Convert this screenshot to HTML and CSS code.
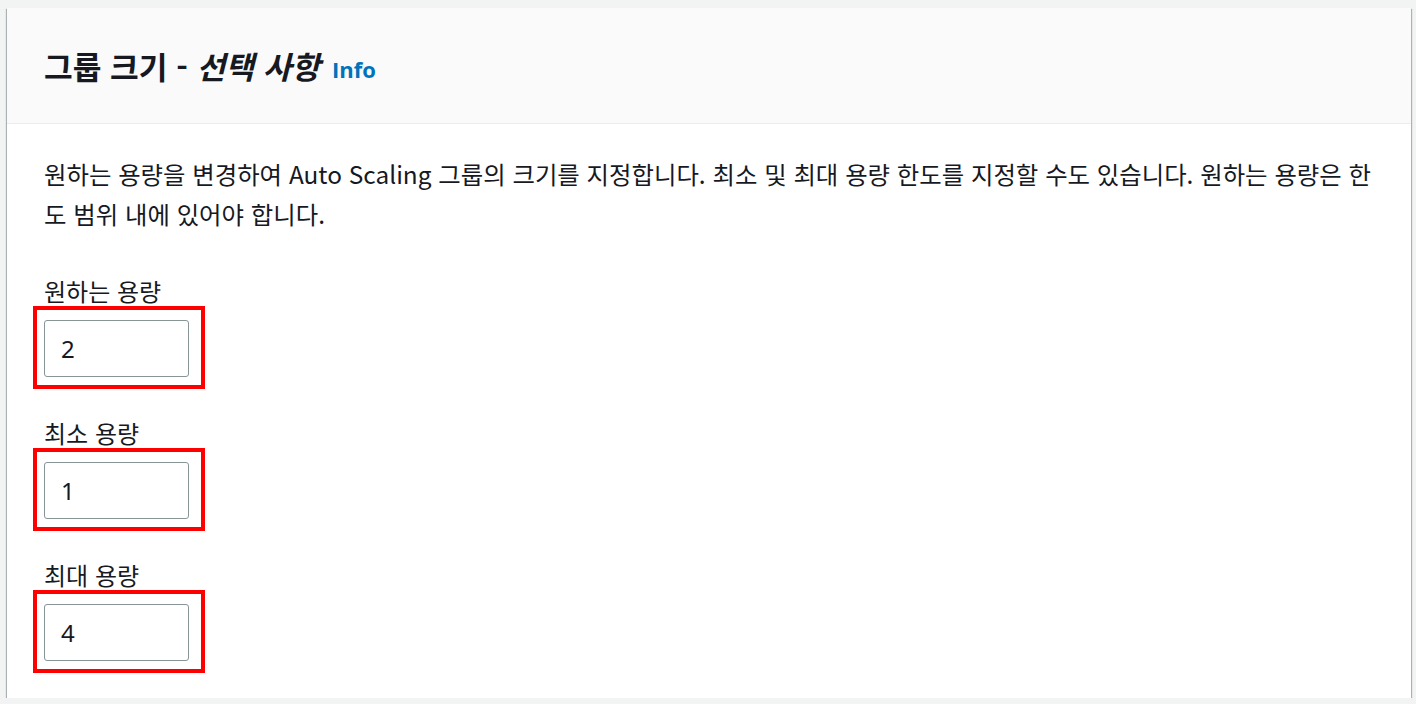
FILE: index.html
```html
<!DOCTYPE html>
<html lang="ko">
<head>
  <meta charset="UTF-8">
  <meta name="viewport" content="width=device-width, initial-scale=1.0">
  <title>그룹 크기</title>
  <link rel="stylesheet" href="styles.css">
</head>
<body>
  <!-- 그룹 크기 패널 -->
  <div class="panel">
    <div class="panel-header">
      <h2 class="panel-title">그룹 크기 - <em>선택 사항</em></h2>
      <a class="info-link" href="#">Info</a>
    </div>

    <div class="panel-body">
      <p class="description">원하는 용량을 변경하여 Auto Scaling 그룹의 크기를 지정합니다. 최소 및 최대 용량 한도를 지정할 수도 있습니다. 원하는 용량은 한도 범위 내에 있어야 합니다.</p>

      <div class="field">
        <label class="field-label" for="desired">원하는 용량</label>
        <div class="input-wrap highlight">
          <input class="field-input" id="desired" type="text" value="2">
        </div>
      </div>

      <div class="field">
        <label class="field-label" for="min">최소 용량</label>
        <div class="input-wrap highlight">
          <input class="field-input" id="min" type="text" value="1">
        </div>
      </div>

      <div class="field">
        <label class="field-label" for="max">최대 용량</label>
        <div class="input-wrap highlight">
          <input class="field-input" id="max" type="text" value="4">
        </div>
      </div>
    </div>
  </div>
</body>
</html>
```

FILE: styles.css
```css
/* 기본 */
body {
  margin: 0;
  padding: 8px 5px 0 7px;
  background-color: #f2f3f3;
  font-family: "Noto Sans CJK KR", "Noto Sans", sans-serif;
  color: #16191f;
}

/* 패널 */
.panel {
  background-color: #ffffff;
  box-shadow: 0 1px 1px 0 rgba(0, 28, 36, 0.35),
              1px 1px 1px 0 rgba(0, 28, 36, 0.25),
              -1px 1px 1px 0 rgba(0, 28, 36, 0.25);
}

.panel-header {
  height: 116px;
  box-sizing: border-box;
  padding: 0 37px;
  background-color: #fafafa;
  border-bottom: 1px solid #eaeded;
  display: flex;
  align-items: center;
  gap: 12px;
}

.panel-title {
  margin: 0;
  font-size: 31.2px;
  font-weight: 700;
  line-height: 1;
}

.panel-title em {
  font-style: italic;
}

.info-link {
  color: #0073bb;
  font-family: "Open Sans", "Noto Sans", sans-serif;
  font-size: 22px;
  font-weight: 700;
  text-decoration: none;
  padding-top: 6px;
}

.panel-body {
  padding: 30px 37px 37px;
}

.description {
  margin: 0 0 42px;
  font-size: 24.4px;
  line-height: 40px;
}

/* 입력 필드 */
.field + .field {
  margin-top: 41px;
}

.field-label {
  display: block;
  font-size: 24px;
  line-height: 30px;
  margin-bottom: 14px;
}

.input-wrap {
  display: inline-block;
  vertical-align: top;
}

.field-input {
  display: block;
  width: 145px;
  height: 57px;
  box-sizing: border-box;
  margin: 0;
  padding: 0 16px;
  border: 1px solid #879596;
  border-radius: 3px;
  font-family: "Noto Sans", sans-serif;
  font-size: 24px;
  color: #16191f;
  background-color: #ffffff;
  outline: none;
}

/* 빨간 강조 상자 */
.highlight {
  position: relative;
}

.highlight::after {
  content: "";
  position: absolute;
  top: -14px;
  right: -16px;
  bottom: -12px;
  left: -11px;
  border: 4px solid #ff0000;
  pointer-events: none;
}
```
